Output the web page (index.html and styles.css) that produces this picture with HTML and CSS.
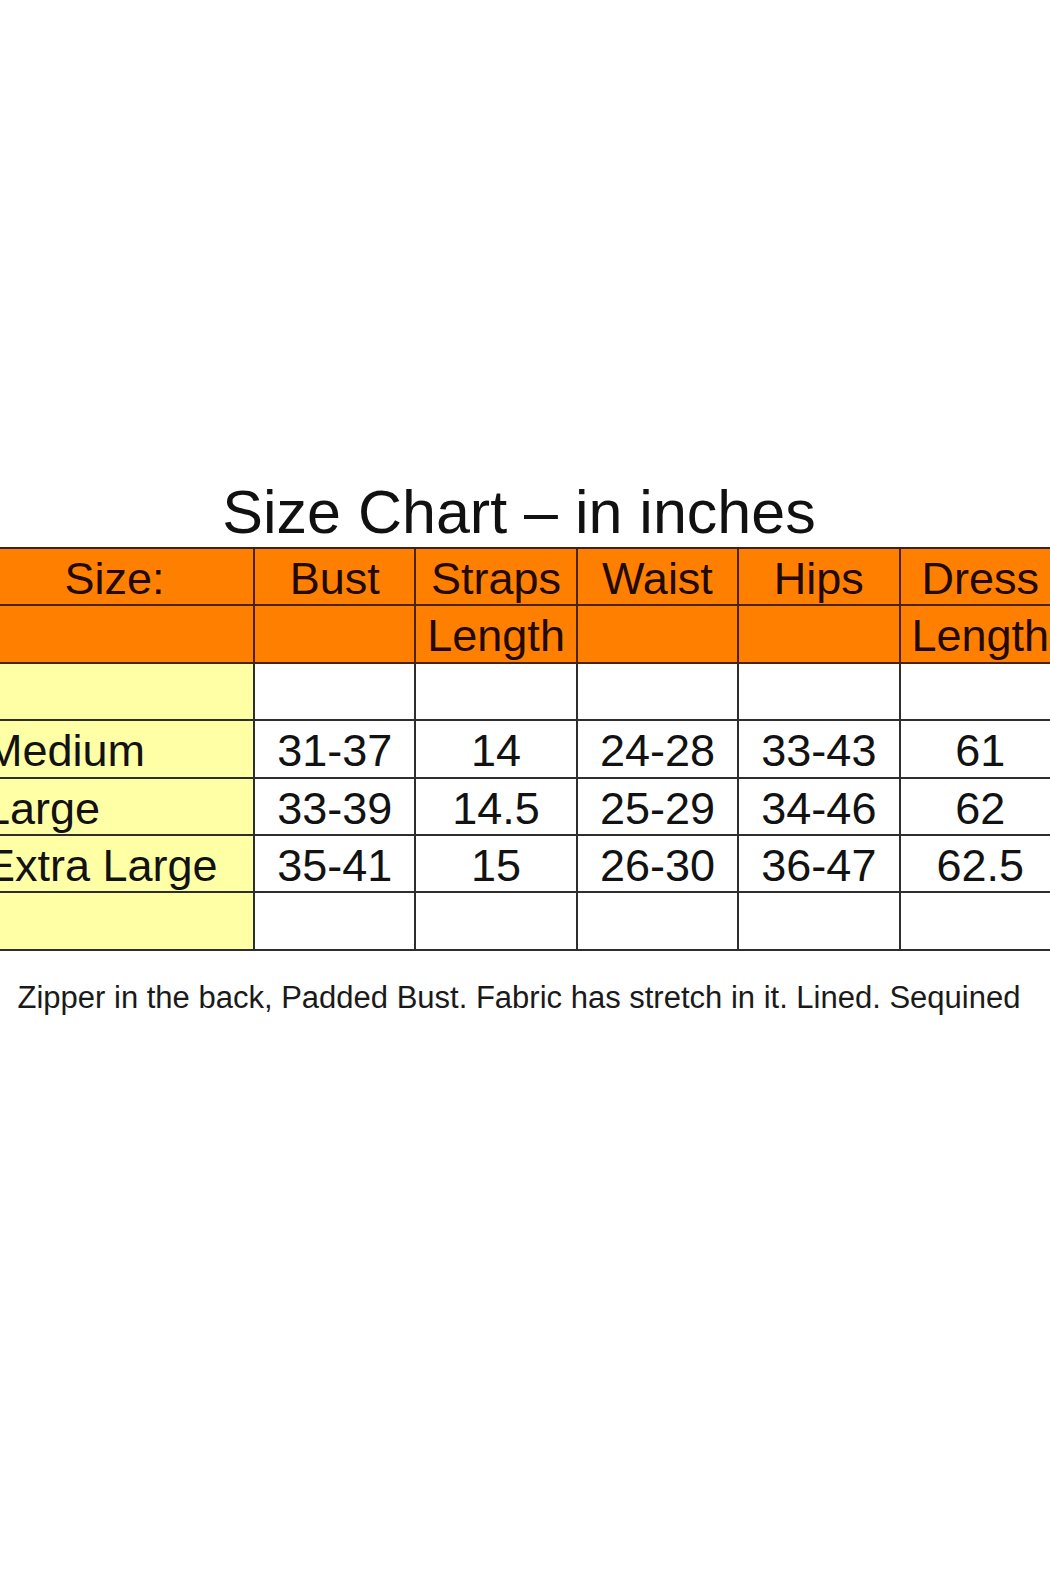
FILE: index.html
```html
<!DOCTYPE html>
<html lang="en">
<head>
<meta charset="utf-8">
<title>Size Chart</title>
<link rel="stylesheet" href="styles.css">
</head>
<body>
<main class="sheet">
  <h1 class="title">Size Chart – in inches</h1>
  <div class="chart">
    <div class="cell head">Size:</div>
    <div class="cell head">Bust</div>
    <div class="cell head">Straps</div>
    <div class="cell head">Waist</div>
    <div class="cell head">Hips</div>
    <div class="cell head">Dress</div>

    <div class="cell head"></div>
    <div class="cell head"></div>
    <div class="cell head">Length</div>
    <div class="cell head"></div>
    <div class="cell head"></div>
    <div class="cell head">Length</div>

    <div class="cell label"></div>
    <div class="cell"></div>
    <div class="cell"></div>
    <div class="cell"></div>
    <div class="cell"></div>
    <div class="cell"></div>

    <div class="cell label">Medium</div>
    <div class="cell">31-37</div>
    <div class="cell">14</div>
    <div class="cell">24-28</div>
    <div class="cell">33-43</div>
    <div class="cell">61</div>

    <div class="cell label">Large</div>
    <div class="cell">33-39</div>
    <div class="cell">14.5</div>
    <div class="cell">25-29</div>
    <div class="cell">34-46</div>
    <div class="cell">62</div>

    <div class="cell label">Extra Large</div>
    <div class="cell">35-41</div>
    <div class="cell">15</div>
    <div class="cell">26-30</div>
    <div class="cell">36-47</div>
    <div class="cell">62.5</div>

    <div class="cell label"></div>
    <div class="cell"></div>
    <div class="cell"></div>
    <div class="cell"></div>
    <div class="cell"></div>
    <div class="cell"></div>
  </div>
  <p class="note">Zipper in the back, Padded Bust. Fabric has stretch in it. Lined. Sequined</p>
</main>
</body>
</html>
```

FILE: styles.css
```css
html, body {
  margin: 0;
  padding: 0;
  background: #ffffff;
}

body {
  width: 1050px;
  height: 1575px;
  overflow: hidden;
  font-family: "Liberation Sans", Arial, sans-serif;
  color: #111111;
}

.sheet {
  width: 1086px;
  margin-left: -24px;
  padding-top: 477px;
}

.title {
  margin: 0;
  font-size: 61px;
  font-weight: 400;
  line-height: 70px;
  text-align: center;
  color: #111111;
}

.chart {
  display: grid;
  grid-template-columns: 279px repeat(5, 161.4px);
  grid-auto-rows: 57.4px;
  border-top: 2px solid #3a2410;
}

.cell {
  box-sizing: border-box;
  border-right: 2px solid #2e2e2e;
  border-bottom: 2px solid #2e2e2e;
  background: #ffffff;
  font-size: 45px;
  line-height: 53px;
  padding-top: 3px;
  text-align: center;
  white-space: nowrap;
  overflow: hidden;
  color: #121212;
}

.head {
  background: #ff8000;
  color: #220a00;
  border-right-color: #4a2405;
  border-bottom-color: #4a2405;
}

.label {
  background: #ffffa6;
  text-align: left;
  padding-left: 9px;
}

.note {
  margin: 29px 0 0;
  font-size: 31px;
  line-height: 36px;
  text-align: center;
  color: #1a1a1a;
}
```
